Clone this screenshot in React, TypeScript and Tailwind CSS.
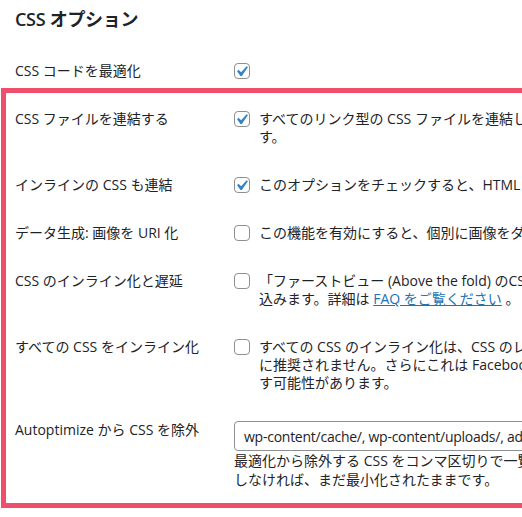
import type { ReactNode } from 'react';

const FONT = 'font-["Open_Sans","Noto_Sans_CJK_JP",sans-serif]';

function Checkbox({ checked }: { checked: boolean }) {
    return (
        <span className="relative mt-[1px] h-4 w-4 shrink-0 rounded-[4px] border border-[#8c8f94] bg-white">
            {checked && (
                <svg viewBox="0 0 20 20" className="absolute -left-[4px] -top-[3px] h-[21px] w-[21px]">
                    <path d="M14.83 4.89l1.34.94-5.81 8.38H9.02L5.78 9.67l1.34-1.25 2.57 2.4z" fill="#3582c4" />
                </svg>
            )}
        </span>
    );
}

interface OptionRowProps {
    label: string;
    checked: boolean;
    lines: ReactNode[];
}

function OptionRow({ label, checked, lines }: OptionRowProps) {
    return (
        <div className="flex">
            <div className="w-[219px] shrink-0 whitespace-nowrap leading-[18px]">{label}</div>
            <div className="flex gap-[9px]">
                <Checkbox checked={checked} />
                {lines.length > 0 && (
                    <div className="leading-[18px]">
                        {lines.map((line, i) => (
                            <div key={i} className="whitespace-nowrap">
                                {line}
                            </div>
                        ))}
                    </div>
                )}
            </div>
        </div>
    );
}

export default function App() {
    return (
        <div className={`h-[517px] w-[522px] overflow-hidden bg-white text-[14px] text-[#1d2327] ${FONT}`}>
            <h2 className="pl-[15px] pt-[8px] text-[18px] font-semibold leading-[23px] tracking-[-0.3px]">CSS オプション</h2>

            {/* Row outside the highlight */}
            <div className="pl-[15px] pt-[31px] pb-[8px]">
                <OptionRow label="CSS コードを最適化" checked lines={[]} />
            </div>

            {/* Highlighted block */}
            <div className="ml-[1px] w-[760px] border-[5px] border-[#f04f6c] pl-[9px] pt-[17px] pb-[14px]">
                <div className="flex flex-col gap-[30px]">
                    <OptionRow
                        label="CSS ファイルを連結する"
                        checked
                        lines={['すべてのリンク型の CSS ファイルを連結して、ページの読み込みを高速化しま', 'す。']}
                    />
                    <OptionRow
                        label="インラインの CSS も連結"
                        checked
                        lines={['このオプションをチェックすると、HTML 内のインライン CSS も連結されます。']}
                    />
                    <OptionRow
                        label="データ生成: 画像を URI 化"
                        checked={false}
                        lines={['この機能を有効にすると、個別に画像をダウンロードする代わりに、小さな背景画像が CSS に埋め込まれます。']}
                    />
                    <OptionRow
                        label="CSS のインライン化と遅延"
                        checked={false}
                        lines={[
                            '「ファーストビュー (Above the fold) のCSS」をインライン化し、残りの CSS を遅延読み',
                            <>
                                込みます。詳細は{' '}
                                <a className="text-[#2271b1] underline">FAQ をご覧ください</a> 。
                            </>,
                        ]}
                    />
                    <OptionRow
                        label="すべての CSS をインライン化"
                        checked={false}
                        lines={[
                            'すべての CSS のインライン化は、CSS のレンダーブロックを防ぐ簡単な方法ですが、一般的',
                            'に推奨されません。さらにこれは Facebook などでの共有時にページの表示に問題を引き起こ',
                            'す可能性があります。',
                        ]}
                    />

                    <div className="-mt-[1px] flex">
                        <div className="w-[219px] shrink-0 whitespace-nowrap leading-[18px]">Autoptimize から CSS を除外</div>
                        <div className="flex flex-col">
                            <div className="flex h-[30px] w-[520px] items-center whitespace-nowrap rounded-[4px] border border-[#8c8f94] bg-white pl-[9px] tracking-[-0.25px]">
                                wp-content/cache/, wp-content/uploads/, admin-bar.min.css, dashicons.min.css
                            </div>
                            <div className="leading-[19px]">
                                <div className="whitespace-nowrap">最適化から除外する CSS をコンマ区切りで一覧表示します。除外されたファイルも、最小化</div>
                                <div className="whitespace-nowrap">しなければ、まだ最小化されたままです。</div>
                            </div>
                        </div>
                    </div>
                </div>
            </div>
        </div>
    );
}
